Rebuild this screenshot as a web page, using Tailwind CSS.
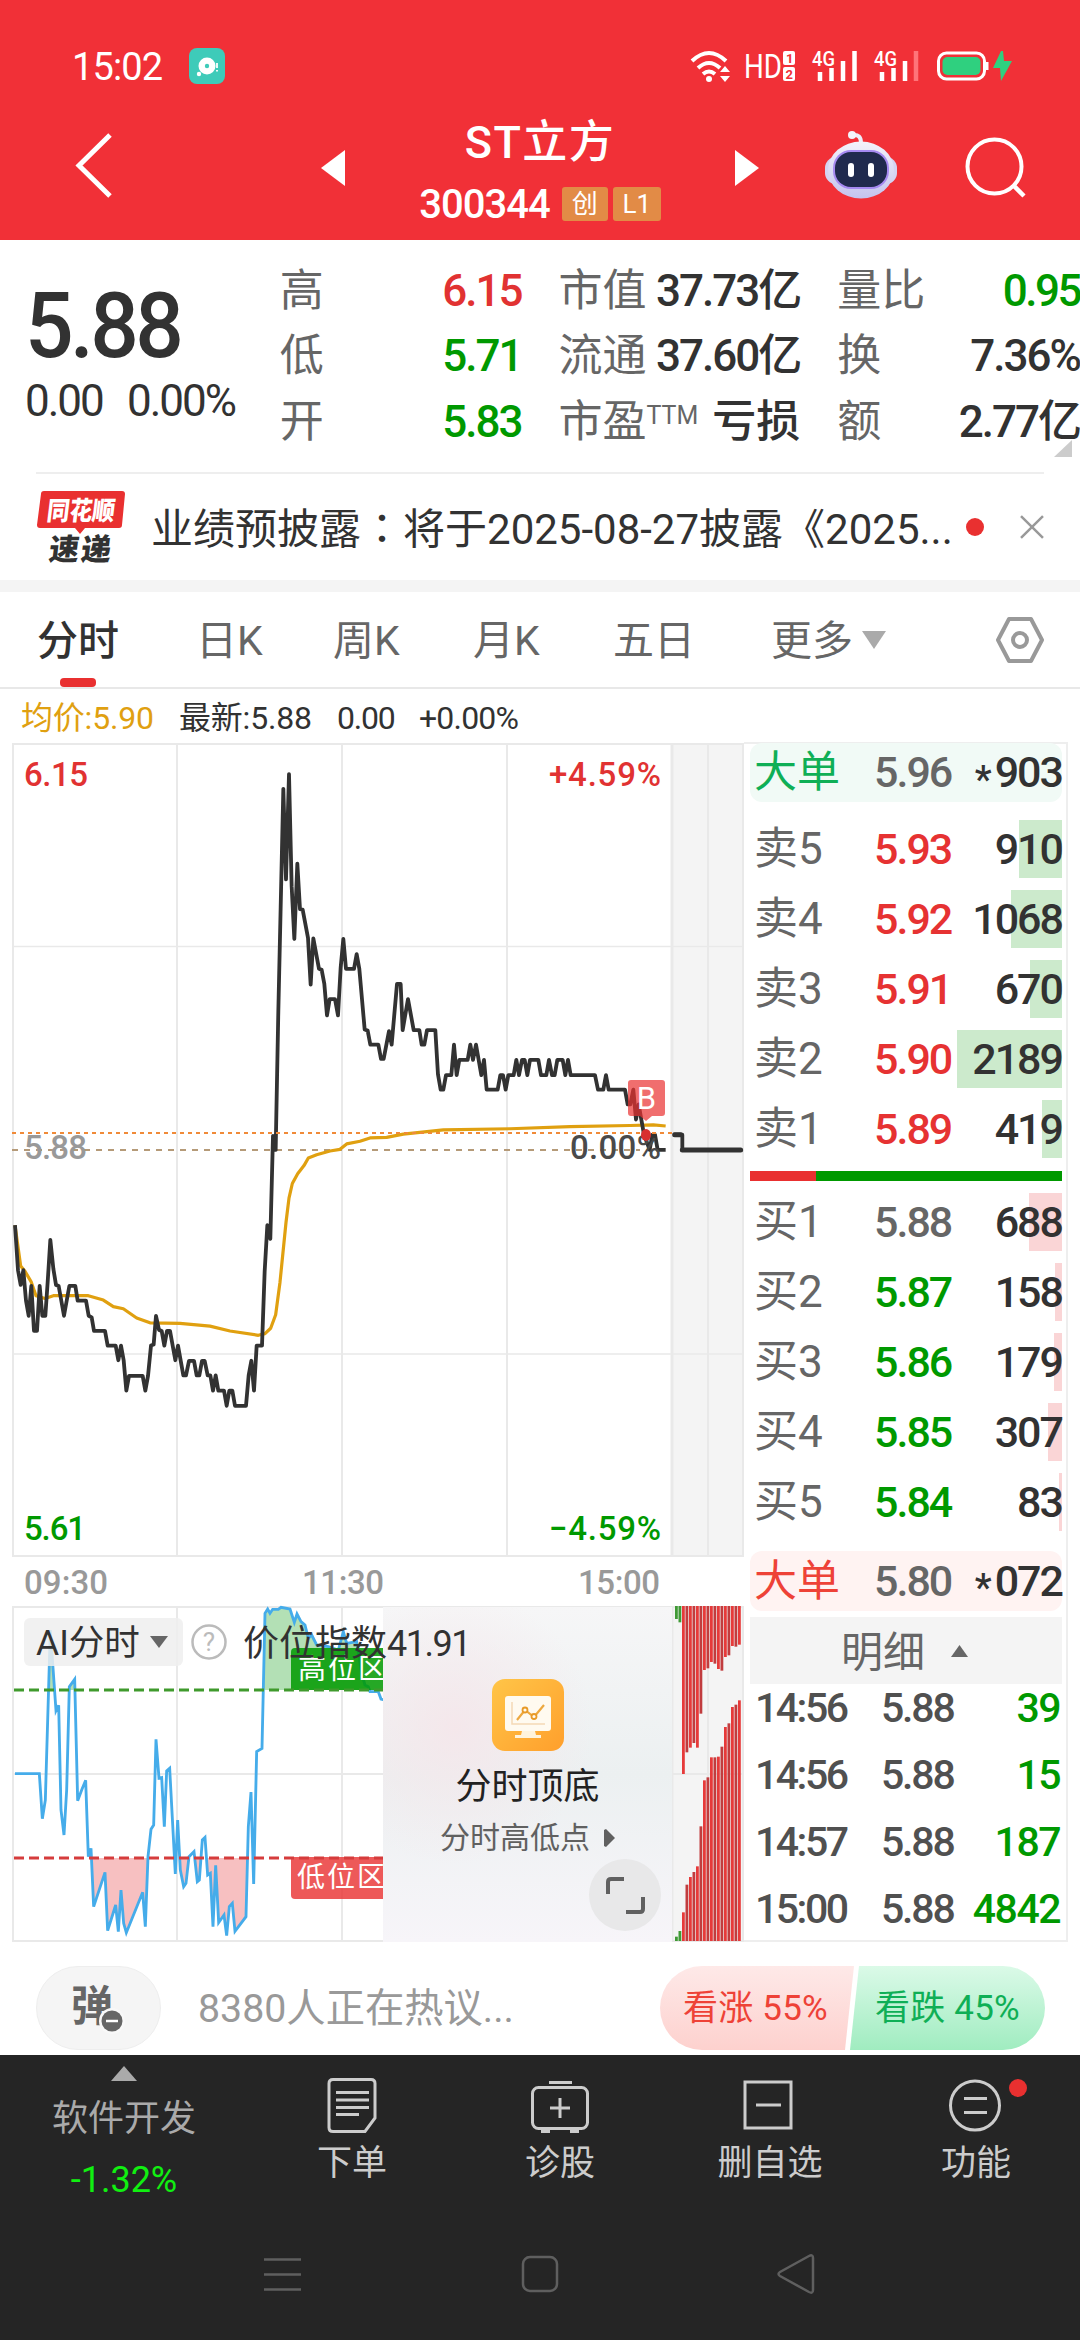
<!DOCTYPE html>
<html lang="zh-CN">
<head>
<meta charset="utf-8">
<title>ST立方 300344</title>
<script src="https://cdn.jsdelivr.net/npm/@tailwindcss/browser@4"></script>
</head>
<body class="w-[1080px] h-[2340px] overflow-hidden bg-white text-[#323232] font-['Roboto','Noto_Sans_CJK_SC',sans-serif] leading-none whitespace-nowrap">

<!-- header -->
<header class="h-[240px] bg-[#f13037] text-white flex flex-col">
  <div class="h-[110px] pt-[22px] pl-[72px] flex items-center">
    <span class="text-[38px] w-[117px] pt-px tracking-[-0.9px]">15:02</span>
    <svg class="w-9 h-9" viewBox="0 0 36 36"><rect width="36" height="36" rx="8" fill="#3ecbb9"/><circle cx="18" cy="18" r="8.5" fill="#fff"/><circle cx="18" cy="18" r="2.2" fill="#3ecbb9"/><circle cx="10" cy="26" r="2.2" fill="#fff"/><path d="M28 15v5M28 22v1.5" stroke="#fff" stroke-width="1.8"/></svg>
    <svg class="ml-[464px] w-[326px] h-[36px] overflow-visible" viewBox="688 48 326 36" fill="none">
      <g stroke="#fff" stroke-width="4">
        <path d="M691 61Q708 45 725 61M697 68Q708 58 719 68M702 74Q708 69 714 74"/>
      </g>
      <circle cx="708" cy="79" r="3" fill="#fff"/>
      <path d="M719 72l5-6 5 6zM719 76l5 6 5-6z" fill="#fff"/>
      <text x="743" y="78" font-size="33" fill="#fff" textLength="38" lengthAdjust="spacingAndGlyphs">HD</text>
      <rect x="782" y="51" width="12" height="14" rx="2" fill="#fff"/><rect x="782" y="67" width="12" height="14" rx="2" fill="#fff"/>
      <text x="785" y="63" font-size="13" font-weight="bold" fill="#f13037">1</text><text x="784.5" y="79" font-size="13" font-weight="bold" fill="#f13037">2</text>
      <text x="811" y="66" font-size="20" font-weight="500" fill="#fff" textLength="23" lengthAdjust="spacingAndGlyphs">4G</text>
      <path d="M819 72v9M830.500 68v13M842 61v20M853.500 51v30M881 72v9M892.500 68v13M904 61v20" stroke="#fff" stroke-width="4.500"/>
      <path d="M915 51v30" stroke="#ff7479" stroke-width="4.500"/>
      <text x="873" y="66" font-size="20" font-weight="500" fill="#fff" textLength="23" lengthAdjust="spacingAndGlyphs">4G</text>
      <rect x="937.500" y="53" width="46" height="26" rx="8" stroke="#fff" stroke-width="3"/>
      <rect x="941.500" y="57" width="38" height="18" rx="5" fill="#2fd07f"/><path d="M986 62v8" stroke="#fff" stroke-width="3"/>
      <path d="M1000 51L992 68h7l1 13 11-20h-8l-1-10z" fill="#2fd07f"/>
    </svg>
  </div>
  <div class="h-[130px] flex">
    <svg class="w-[400px] h-[130px]" viewBox="0 110 400 130" fill="none"><path d="M110 135L79 165.500L110 196" stroke="#fff" stroke-width="5"/><path d="M345 150v36L321 168z" fill="#fff"/></svg>
    <div class="w-[280px] flex flex-col items-center">
      <div class="text-[45px] font-medium mt-[9px] h-[48px] leading-[48px] tracking-[1.4px]">ST立方</div>
      <div class="mt-[18px] flex items-center h-[38px]">
        <span class="text-[40px] font-medium tracking-[-1px] pt-px">300344</span>
        <span class="ml-[12px] w-[46px] h-[34px] bg-[#e28b46] rounded-[3px] text-[26px] flex items-center justify-center">创</span>
        <span class="ml-[5px] w-[48px] h-[34px] bg-[#e28b46] rounded-[3px] text-[26px] flex items-center justify-center">L1</span>
      </div>
    </div>
    <svg class="w-[400px] h-[130px]" viewBox="680 110 400 130" fill="none">
      <defs><linearGradient id="rb" x1="0" y1="0" x2="0" y2="1"><stop offset="0" stop-color="#f4f2fa"/><stop offset="1" stop-color="#c4c3ee"/></linearGradient></defs>
      <path d="M735 150v36L759 168z" fill="#fff"/>
      <path d="M861 143q0-9-8-8" stroke="#eeeef8" stroke-width="4" stroke-linecap="round"/><circle cx="852" cy="135" r="4" fill="#f4f4fb"/>
      <rect x="825" y="157" width="72" height="27" rx="11" fill="#d5d3f2"/>
      <ellipse cx="861" cy="170" rx="33" ry="28.500" fill="url(#rb)"/>
      <rect x="833" y="150" width="56" height="39" rx="18" fill="#a68af0"/>
      <rect x="835" y="152" width="52" height="35" rx="16" fill="#202a4d"/>
      <rect x="848" y="163" width="6" height="14" rx="3" fill="#fff"/><rect x="868" y="163" width="6" height="14" rx="3" fill="#fff"/>
      <circle cx="994.500" cy="166.500" r="27" stroke="#fff" stroke-width="4"/><path d="M1014 186l10 10" stroke="#fff" stroke-width="4.500"/>
    </svg>
  </div>
</header>

<!-- quote summary -->
<section class="h-[232px] pt-[18px] flex relative">
  <div class="w-[280px] pl-[25px] pt-[22px]">
    <div class="text-[91px] font-medium tracking-[-3.800px] h-[92px] leading-[92px] origin-left scale-x-[0.94]">5.88</div>
    <div class="text-[44px] mt-[5px] h-[48px] leading-[48px] tracking-[-2px]"><span class="inline-block w-[102px]">0.00</span><span>0.00%</span></div>
  </div>
  <div class="w-[242px] text-[44px] text-[#666]">
    <div class="h-[65.500px] flex justify-between items-center"><span>高</span><b class="font-medium text-[#e13232] tracking-[-2px]">6.15</b></div>
    <div class="h-[65.500px] flex justify-between items-center"><span>低</span><b class="font-medium text-[#009900] tracking-[-2px]">5.71</b></div>
    <div class="h-[65.500px] flex justify-between items-center"><span>开</span><b class="font-medium text-[#009900] tracking-[-2px]">5.83</b></div>
  </div>
  <div class="ml-[37px] w-[242px] text-[44px] text-[#666]">
    <div class="h-[65.500px] flex justify-between items-center"><span>市值</span><b class="font-medium text-[#323232] tracking-[-2px]">37.73亿</b></div>
    <div class="h-[65.500px] flex justify-between items-center"><span>流通</span><b class="font-medium text-[#323232] tracking-[-2px]">37.60亿</b></div>
    <div class="h-[65.500px] flex justify-between items-center"><span class="flex">市盈<i class="not-italic text-[25px] pt-[3px]">TTM</i></span><b class="font-medium text-[#323232]">亏损</b></div>
  </div>
  <div class="ml-[37px] w-[243px] text-[44px] text-[#666]">
    <div class="h-[65.500px] flex justify-between items-center"><span>量比</span><b class="font-medium text-[#009900] tracking-[-2.500px]">0.95</b></div>
    <div class="h-[65.500px] flex justify-between items-center"><span>换</span><b class="font-medium text-[#323232] tracking-[-2px]">7.36%</b></div>
    <div class="h-[65.500px] flex justify-between items-center"><span>额</span><b class="font-medium text-[#323232] tracking-[-2px]">2.77亿</b></div>
  </div>
  <svg class="absolute right-2 top-[200px] w-[18px] h-[17px]" viewBox="0 0 18 17"><path d="M18 0v17H0z" fill="#ccc"/></svg>
</section>

<!-- news -->
<section class="h-[108px] mx-9 border-t-2 border-[#eee] flex items-center">
  <svg class="w-[90px] h-[76px] overflow-visible" viewBox="36 488 90 76">
    <path d="M44 490h78q3 0 3 3l-3 31q0 3-3 3H85l-5 6-5-6H40q-3 0-3-3l4-31q0-3 3-3z" fill="#e93030"/>
    <text x="0" y="0" transform="translate(46 519) skewX(-7)" font-size="26" font-weight="900" fill="#fff" textLength="68" lengthAdjust="spacingAndGlyphs">同花顺</text>
    <text x="0" y="0" transform="translate(48 559) skewX(-7)" font-size="30" font-weight="900" fill="#323232" textLength="62">速递</text>
  </svg>
  <span class="ml-[25px] w-[816px] text-[42px] pt-[2px]">业绩预披露<span class="font-['Noto_Sans_CJK_TC',sans-serif]" lang="zh-TW">：</span>将于2025-08-27披露《2025...</span>
  <span class="w-[18px] h-[18px] rounded-full bg-[#e93030]"></span>
  <svg class="ml-[36px] w-6 h-6" viewBox="0 0 24 24"><path d="M1 1L23 23M23 1L1 23" stroke="#999" stroke-width="2.500"/></svg>
</section>
<div class="h-3 bg-[#f4f4f4]"></div>

<!-- period tabs -->
<nav class="h-[97px] border-b-2 border-[#e8e8e8] flex items-center text-[41px] text-[#666] pl-[37px] relative">
  <span class="w-[159px] pt-1 text-[#323232] font-medium">分时</span>
  <span class="w-[137px] pt-1">日K</span>
  <span class="w-[140px] pt-1">周K</span>
  <span class="w-[140px] pt-1">月K</span>
  <span class="w-[158px] pt-1">五日</span>
  <span class="w-[91px] pt-1">更多</span>
  <svg class="w-6 h-[18px]" viewBox="0 0 24 18"><path d="M0 0h24L12 18z" fill="#aaa"/></svg>
  <svg class="ml-[110px] w-12 h-12" viewBox="0 0 48 48" fill="none" stroke="#999" stroke-width="4"><path d="M13 3h22l11 21-11 21H13L2 24z" stroke-linejoin="round"/><circle cx="24" cy="24" r="7"/></svg>
  <i class="absolute left-[60px] bottom-0 w-9 h-[9px] rounded bg-[#e93030]"></i>
</nav>

<!-- price line legend -->
<div class="h-[53px] pt-[5px] pl-[21px] flex items-center text-[32px]">
  <span class="w-[158px] text-[#e0a010] tracking-[-0.200px]">均价:5.90</span><span class="w-[158px] tracking-[-0.200px]">最新:5.88</span><span class="w-[82px] tracking-[-1.200px]">0.00</span><span class="tracking-[-0.800px]">+0.00%</span>
</div>

<main class="flex h-[1200px]">
  <!-- charts -->
  <div class="relative w-[744px] h-[1200px]">
    <svg class="block w-[744px] h-[1200px]" viewBox="0 742 744 1200" fill="none">
      <rect x="672" y="743" width="71" height="813" fill="#f4f4f4"/>
      <rect x="672" y="1606" width="71" height="335" fill="#f4f4f4"/>
      <g stroke="#e9e9e9" stroke-width="2">
        <rect x="13" y="744" width="730" height="812"/>
        <path d="M13 946.500H743M13 1354H743" stroke-width="1.500"/>
        <path d="M177 744V1556M342 744V1556M507 744V1556M708 744V1556M177 1607V1941M342 1607V1941M708 1607V1941M13 1774H743"/>
        <path d="M672 744V1556M672 1607V1941" stroke-width="3"/>
        <rect x="13" y="1607" width="730" height="334"/>
      </g>
      <path d="M12 1150H640" stroke="#b59a78" stroke-width="2" stroke-dasharray="6 6"/>
      <g font-size="33" font-weight="500">
        <text x="24" y="786" fill="#e13232" textLength="64">6.15</text>
        <text x="549" y="786" fill="#e13232" textLength="112">+4.59%</text>
        <text x="24" y="1159" fill="#999" textLength="63">5.88</text>
        <text x="24" y="1540" fill="#009900" textLength="62">5.61</text>
        <text x="549" y="1540" fill="#009900" textLength="112">−4.59%</text>
        <g fill="#999"><text x="24" y="1594" textLength="84">09:30</text><text x="302" y="1594" textLength="82">11:30</text><text x="578" y="1594" textLength="82">15:00</text></g>
      </g>
      <g transform="translate(0 740) scale(.33333 .54217)">
        <path vector-effect="non-scaling-stroke" stroke="#e0a010" stroke-width="3.200" stroke-linejoin="round" d="M45 895L62 970 75 980 94 1000 108 1025 135 1030 160 1025 265 1025 310 1033 340 1045 370 1049 410 1066 450 1075 540 1076 630 1081 690 1090 775 1098 795 1095 812 1085 827 1060 840 1000 858 890 867 845 877 818 893 800 912 785 925 771 950 765 990 758 1020 755 1040 745 1080 740 1110 734 1160 733 1210 727 1330 719 1530 717 1710 713 1890 711 1960 710 1997 712"/>
        <path vector-effect="non-scaling-stroke" stroke="#323232" stroke-width="3.800" stroke-linejoin="round" d="M45 895L54 978 62 1005 70 978 78 1034 86 1062 94 1007 102 1090 111 1090 119 1007 127 1062 136 1062 143 1000 151 922 160 975 168 1005 176 1007 192 1062 208 1007 226 1007 233 1034 258 1034 266 1062 275 1065 282 1090 315 1090 323 1117 347 1117 355 1144 363 1117 371 1144 379 1200 387 1173 428 1173 436 1200 444 1173 453 1117 461 1115 468 1062 477 1088 485 1090 493 1117 501 1090 510 1090 526 1144 534 1117 550 1172 558 1172 567 1145 582 1145 590 1172 598 1172 606 1145 614 1145 623 1172 631 1172 639 1200 647 1172 655 1200 672 1200 680 1228 688 1200 697 1200 705 1228 738 1228 746 1172 754 1145 762 1200 770 1117 786 1117 794 980 802 895 811 920 819 730 827 756 835 500 850 90 858 257 867 63 875 270 883 367 892 228 900 312 908 313 924 365 932 451 940 366 957 422 965 424 973 450 981 508 989 478 1005 478 1014 508 1022 420 1030 367 1038 422 1062 422 1070 395 1078 422 1094 534 1103 536 1111 562 1135 562 1143 588 1151 588 1167 537 1175 562 1191 450 1202 450 1208 535 1224 478 1241 535 1258 535 1265 562 1273 562 1281 535 1306 535 1314 617 1322 645 1330 645 1338 618 1354 618 1362 562 1370 618 1378 590 1403 590 1411 562 1419 590 1428 562 1444 618 1452 590 1460 645 1493 645 1501 618 1509 618 1517 645 1525 618 1541 618 1549 590 1557 618 1566 590 1574 590 1582 618 1590 590 1615 590 1623 618 1639 618 1647 590 1656 618 1664 618 1672 590 1688 590 1696 618 1704 590 1712 618 1785 618 1794 645 1810 645 1818 618 1826 645 1875 645 1883 672 1891 672 1900 645 1908 700 1916 672 1932 728 1949 756 1957 728 1965 728 1973 756 1997 756M2020 728H2047V756"/>
        <path vector-effect="non-scaling-stroke" stroke="#323232" stroke-width="5" stroke-linecap="round" d="M2047 756H2222M2024 728H2042"/>
      </g>
      <path d="M12 1133H672" stroke="#f08a38" stroke-width="2" stroke-dasharray="4 4"/>
      <text x="570" y="1159" font-size="33" font-weight="500" fill="#4a4a4a" textLength="91">0.00%</text>
      <ellipse cx="646" cy="1135" rx="5" ry="6" fill="#d82f30"/>
      <path d="M631 1080h31q3 0 3 3v30q0 3-3 3h-10l-6 5-6-5h-9q-3 0-3-3v-30q0-3 3-3z" fill="#e93030" fill-opacity=".7"/>
      <text x="646.500" y="1109" font-size="31" text-anchor="middle" fill="#fff">B</text>

      <!-- indicator -->
      <defs>
        <clipPath id="hi"><rect x="36" y="0" width="1113" height="300"/></clipPath>
        <clipPath id="lo"><rect x="36" y="804" width="1113" height="249"/></clipPath>
        <clipPath id="ind"><rect x="12" y="1600" width="371" height="345"/></clipPath>
        <path id="idx" d="M45 551L118 551 127 686 136 630 151 120 168 362 176 346 183 660 192 735 200 600 208 290 224 268 233 632 245 600 257 571 265 800 273 775 281 950 315 847 323 1022 347 945 355 1025 363 900 371 1000 379 1028 428 907 436 1010 444 800 453 718 461 705 468 448 477 565 485 563 493 710 500 543 509 535 526 852 533 690 541 840 551 890 558 880 567 800 582 785 592 875 598 870 607 750 615 742 623 855 631 850 639 1010 647 826 656 998 672 975 680 1037 688 950 697 940 705 1024 738 980 745 710 753 606 761 882 770 485 786 475 795 70 803 57 810 70 818 58 835 58 843 52 870 57 883 97 891 72 903 95 915 105 925 145 935 135 950 165 985 170 1015 180 1030 125 1040 160 1070 155 1085 250 1095 285 1105 290 1110 305 1135 305 1143 327 1149 329H1200V551"/>
      </defs>
      <g clip-path="url(#ind)">
        <g transform="translate(0 1590) scale(.33333)">
          <use href="#idx" fill="#b3e0b5" clip-path="url(#hi)"/>
          <use href="#idx" fill="#f7c0c1" clip-path="url(#lo)"/>
          <use href="#idx" stroke="#45acea" stroke-width="8.500"/>
        </g>
        <path d="M291 1690V1652q0-4 4-4h100v42z" fill="#009900" fill-opacity=".85"/>
        <path d="M291 1857h100v42h-96q-4 0-4-4z" fill="#e93030" fill-opacity=".8"/>
        <path d="M14 1690H383" stroke="#3f9a2c" stroke-width="3" stroke-dasharray="10 5"/>
        <path d="M14 1858H383" stroke="#d53c3c" stroke-width="3" stroke-dasharray="10 5"/>
        <g font-size="28" fill="#fff"><text x="298" y="1679" letter-spacing="2">高位区</text><text x="297" y="1887" letter-spacing="2">低位区</text></g>
      </g>
      <g id="auction"></g>
    </svg>

    <!-- promo card over the indicator -->
    <div class="absolute left-[383px] top-[865px] w-[289px] h-[335px] bg-linear-to-b from-[#f6f6f7] via-[#ecf0f1] to-[#f7f5f9] flex flex-col items-center overflow-hidden">
      <div class="absolute inset-0 bg-radial-[at_25%_36%] from-[#f5e6ea]/90 to-transparent to-45%"></div>
      <svg class="relative mt-[72px] mr-[-1px] w-[72px] h-[72px]" viewBox="0 0 72 72" fill="none">
        <defs><linearGradient id="og" x1="0" y1="0" x2="1" y2="1"><stop stop-color="#ffc548"/><stop offset="1" stop-color="#ff9f2c"/></linearGradient></defs>
        <rect width="72" height="72" rx="13" fill="url(#og)"/>
        <rect x="13" y="17" width="46" height="35" rx="3" fill="#fffaf0"/><path d="M30 52h13l1 4h5v3H23v-3h6z" fill="#fff3dc"/>
        <path d="M20 23v22h33" stroke="#f5d9b5" stroke-width="1.500"/><path d="M25 41L33 31L42 38L52 26" stroke="#eda83f" stroke-width="2.200"/>
        <circle cx="33" cy="31" r="2.500" fill="#fffaf0" stroke="#e89a28" stroke-width="1.800"/><circle cx="42" cy="37.500" r="2.500" fill="#fffaf0" stroke="#e89a28" stroke-width="1.800"/>
      </svg>
      <div class="relative mt-[18px] text-[36px] text-[#222]">分时顶底</div>
      <div class="relative mt-[18px] flex items-center gap-[14px] text-[30px] text-[#606060]">分时高低点<svg class="w-[11px] h-[18px]" viewBox="0 0 11 18"><path d="M0 1l2-1 9 9-9 9-2-1z" fill="#606060"/></svg></div>
      <svg class="absolute left-[206px] top-[252px] w-[72px] h-[72px]" viewBox="0 0 72 72" fill="none"><circle cx="36" cy="36" r="36" fill="#e8e8e9"/><path d="M35 20H22q-3 0-3 3v12M37 53h14q3 0 3-3V38" stroke="#606060" stroke-width="4"/></svg>
    </div>

    <!-- indicator picker -->
    <div class="absolute left-6 top-[876px] h-12 flex items-center">
      <div class="w-[159px] h-12 rounded-md bg-[#eee]/85 pl-3 pt-[3px] flex items-center text-[35.500px]">AI分时<svg class="ml-[10px] mb-[3px] w-[18px] h-[12px]" viewBox="0 0 18 12"><path d="M0 0h18L9 12z" fill="#666"/></svg></div>
      <svg class="ml-2 w-9 h-9" viewBox="0 0 36 36" fill="none"><circle cx="18" cy="18" r="16.500" stroke="#bbb" stroke-width="2.500"/><text x="18" y="27" font-size="26" text-anchor="middle" fill="#bbb">?</text></svg>
      <span class="ml-[16px] pt-[3px] text-[36px]">价位指数<span class="tracking-[-1.500px]">41.91</span></span>
    </div>
  </div>

  <!-- order book -->
  <aside class="w-[324px] h-[1200px] border-2 border-l-0 border-[#eee] pl-[6px] pr-[4px] text-[43px]">
    <div class="h-[59px] rounded-xl bg-[#f1faf6] flex items-center -mt-px">
      <span class="w-[124px] pl-1 text-[#0faf56]">大单</span><span class="w-[90px] text-[#666] font-medium tracking-[-2px]">5.96</span><span class="flex-1 flex items-center justify-end font-medium tracking-[-2px]"><span class="text-[38px] pt-[14px] mr-[5px]">*</span>903</span>
    </div>
    <div id="asks" class="mt-[18px]"></div>
    <div class="mt-[1px] h-[10px] flex"><i class="w-[66px] bg-[#e93030]"></i><i class="flex-1 bg-[#009900]"></i></div>
    <div id="bids" class="mt-3"></div>
    <div class="mt-[8px] h-[60px] rounded-xl bg-[#fff3f2] flex items-center">
      <span class="w-[124px] pl-1 pt-px text-[#ee4237]">大单</span><span class="w-[90px] text-[#666] font-medium tracking-[-2px]">5.80</span><span class="flex-1 flex items-center justify-end font-medium tracking-[-2px]"><span class="text-[38px] pt-[14px] mr-[5px]">*</span>072</span>
    </div>
    <div class="mt-[6px] h-[67px] bg-[#f4f4f4] flex items-center pl-[91px] text-[42px] text-[#666]"><span class="pt-[4px]">明细</span><svg class="ml-[26px] w-[17px] h-[12px]" viewBox="0 0 17 12"><path d="M0 12h17L8.500 0z" fill="#666"/></svg></div>
    <div id="ticks" class="-mt-[9px]"></div>
  </aside>
</main>

<!-- discussion -->
<section class="h-[113px] pl-9 pr-[35px] pt-[24px] flex">
  <div class="w-[125px] h-[84px] rounded-full border border-[#eee] bg-[#f5f5f5] flex items-center pl-[34px] pb-[3px] relative text-[42px] font-bold text-[#666]">弹
    <svg class="absolute left-[62px] top-[41px] w-[26px] h-[26px]" viewBox="0 0 26 26"><circle cx="13" cy="13" r="13" fill="#f8f8f8"/><circle cx="13" cy="13" r="10.500" fill="#666"/><path d="M7 13h12" stroke="#fff" stroke-width="2.500"/></svg>
  </div>
  <div class="ml-[37px] h-[84px] w-[462px] pt-1 flex items-center text-[39.300px] text-[#999]">8380人正在热议...</div>
  <div class="w-[385px] h-[84px] relative flex text-[35px]">
    <svg class="absolute inset-0 w-[385px] h-[84px]" viewBox="0 0 385 84"><defs><linearGradient id="up" x1="0" y1="0" x2="0" y2="1"><stop stop-color="#fee9e8"/><stop offset="1" stop-color="#fdd1ce"/></linearGradient><linearGradient id="dn" x1="0" y1="0" x2="0" y2="1"><stop stop-color="#dbfae8"/><stop offset="1" stop-color="#a0ecc0"/></linearGradient></defs><path d="M42 0H194L185 84H42A42 42 0 0 1 42 0z" fill="url(#up)"/><path d="M199 0H343A42 42 0 0 1 343 84H190z" fill="url(#dn)"/></svg>
    <span class="relative w-[192px] pl-[23px] self-center tracking-[0.200px] text-[#ee4237]">看涨 55%</span><span class="relative pl-[23px] self-center tracking-[0.200px] text-[#0faf56]">看跌 45%</span>
  </div>
</section>

<!-- bottom bar -->
<footer class="h-[285px] bg-[#252525] text-[#ccc]">
  <div class="h-[155px] flex text-[36px] text-center">
    <div class="w-[248px] flex flex-col items-center pt-[11px]"><svg class="w-[26px] h-[15px]" viewBox="0 0 26 15"><path d="M0 15h26L13 0z" fill="#aaa"/></svg><span class="mt-[20px] text-[#aaa]">软件开发</span><span class="mt-[25px] text-[#11ef11]">-1.32%</span></div>
    <div class="w-[208px] flex flex-col items-center pt-[20px]"><svg class="w-[60px] h-[60px]" viewBox="0 0 60 60" fill="none" stroke="#ccc" stroke-width="3"><path d="M11 4.500h38q4 0 4 4V43L43 56.500H11q-4 0-4-4v-44q0-4 4-4z"/><path d="M14 17.500H47M14 25H47M14 32.500H47M14 39.500H37"/></svg><span class="mt-[11px] text-[35px]">下单</span></div>
    <div class="w-[208px] flex flex-col items-center pt-[20px]"><svg class="w-[60px] h-[60px]" viewBox="0 0 60 60" fill="none" stroke="#ccc" stroke-width="3"><rect x="2.500" y="12.500" width="55" height="41" rx="6"/><path d="M19 7.500H42M30 23V43M20 33H40"/><path d="M11 56H20M40 56H49" stroke-width="4"/></svg><span class="mt-[11px] text-[35px]">诊股</span></div>
    <div class="w-[208px] flex flex-col items-center pt-[20px]"><svg class="w-[60px] h-[60px]" viewBox="0 0 60 60" fill="none" stroke="#ccc" stroke-width="3"><rect x="7" y="7" width="46" height="46"/><path d="M18 30H43"/></svg><span class="mt-[11px] pl-1 text-[35px]">删自选</span></div>
    <div class="w-[208px] flex flex-col items-center pt-[20px]"><svg class="w-[60px] h-[60px] overflow-visible" viewBox="0 0 60 60" fill="none" stroke="#ccc" stroke-width="3"><circle cx="29" cy="30.500" r="24.500"/><path d="M18 23.500H41M18 37.500H41"/><circle cx="72" cy="13" r="9" fill="#e93030" stroke="none"/></svg><span class="mt-[11px] text-[35px]">功能</span></div>
  </div>
  <svg class="block w-[1080px] h-[130px]" viewBox="0 2210 1080 130" fill="none" stroke="#5f5f5f" stroke-width="2.500"><path d="M264 2259.500H301M264 2274.500H301M264 2289.500H301"/><rect x="523" y="2257" width="34" height="34" rx="7"/><path d="M813 2258V2290Q813 2294 809 2292L780 2276Q777 2274 780 2272L809 2256Q813 2254 813 2258z"/></svg>
</footer>

<script>
const level = (label, price, tone, vol, w, bar) => `
  <div class="h-[70px] flex relative"><i class="absolute right-0 top-0 h-[58px] ${bar}" style="width:${w}px"></i>
    <div class="relative h-[58px] w-full flex items-center"><span class="w-[124px] pl-1 text-[#666] text-[44px]">${label}</span><span class="w-[90px] font-medium tracking-[-2px] ${tone}">${price}</span><span class="flex-1 text-right font-medium tracking-[-2px]">${vol}</span></div></div>`;
const asks = [['卖5','5.93','910',43],['卖4','5.92','1068',51],['卖3','5.91','670',32],['卖2','5.90','2189',105],['卖1','5.89','419',20]];
const bids = [['买1','5.88','688',33],['买2','5.87','158',7],['买3','5.86','179',8],['买4','5.85','307',14],['买5','5.84','83',3]];
document.getElementById('asks').innerHTML = asks.map(r => level(r[0], r[1], 'text-[#e63232]', r[2], r[3], 'bg-[#cceacc]')).join('');
document.getElementById('bids').innerHTML = bids.map((r, i) => level(r[0], r[1], i ? 'text-[#009900]' : 'text-[#666]', r[2], r[3], 'bg-[#fad5d6]')).join('');
document.getElementById('ticks').innerHTML = [['14:56','39'],['14:56','15'],['14:57','187'],['15:00','4842']].map(r => `
  <div class="h-[67px] flex items-center text-[41px] font-medium text-[#505050]"><span class="w-[131px] pl-[5px] tracking-[-2.500px]">${r[0]}</span><span class="w-[80px] tracking-[-2.200px]">5.88</span><span class="flex-1 text-right text-[#009900] tracking-[-1.500px] pr-[2px]">${r[1]}</span></div>`).join('');

// auction volume: bars hanging from the top and rising from the base
const top_ = [87,97,552,487,473,459,473,371,240,235,216,221,237,242,201,196,168,170,164];
const base = [1040,1023,967,884,861,846,829,709,571,562,502,502,500,470,411,400,351,344,331];
const Y = v => 1590 + v / 3;
let bars = '';
top_.forEach((t, i) => {
  const x = 675 + i * 3.5, c = i < 2 ? '#3f9a35' : (i % 2 ? '#c13c3e' : '#e63a3a');
  bars += `<rect x="${x}" y="1606" width="2.800" height="${Y(t) - 1606}" fill="${c}"/><rect x="${x}" y="${Y(base[i])}" width="2.800" height="${1941 - Y(base[i])}" fill="${c}"/>`;
});
document.getElementById('auction').innerHTML = bars;
</script>
</body>
</html>
